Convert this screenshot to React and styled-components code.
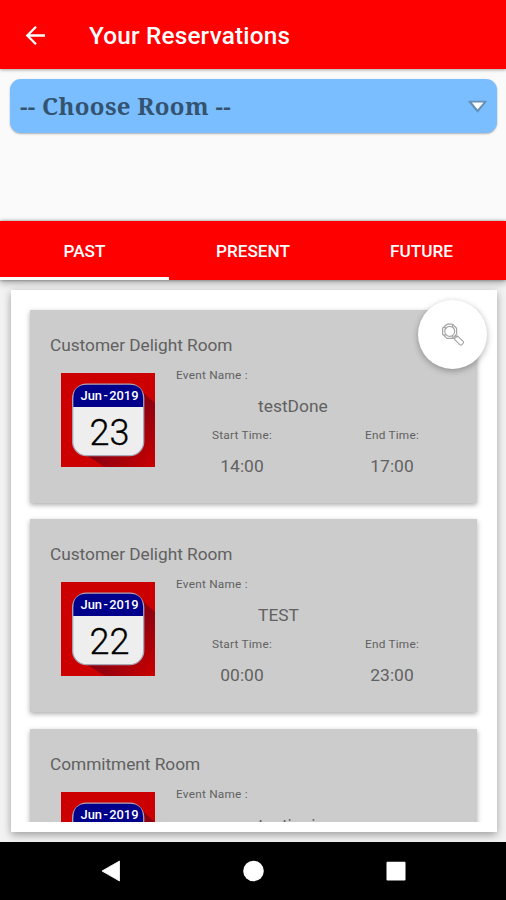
import React from "react";
import styled, { createGlobalStyle } from "styled-components";

const GlobalStyle = createGlobalStyle`
  * { box-sizing: border-box; }
  body { margin: 0; background: #fafafa; font-family: Roboto, sans-serif; }
`;

const Screen = styled.div`
  width: 506px;
  height: 900px;
  display: flex;
  flex-direction: column;
  background: #fafafa;
  overflow: hidden;
`;

const AppBar = styled.header`
  height: 69px;
  flex: none;
  display: flex;
  align-items: center;
  padding: 2px 0 0 25px;
  background: #fe0000;
  box-shadow: 0 1px 3px rgba(0, 0, 0, 0.35);
  svg { display: block; }
`;

const Title = styled.h1`
  margin: 0 0 0 43px;
  font-size: 24.3px;
  font-weight: 500;
  line-height: 30px;
  letter-spacing: 0.2px;
  color: #fff;
  white-space: nowrap;
`;

const Filter = styled.section`
  height: 152px;
  flex: none;
  padding: 10px 9px 0 10px;
`;

const RoomSelect = styled.div`
  height: 54px;
  display: flex;
  align-items: center;
  justify-content: space-between;
  padding: 0 10px;
  border-radius: 11px;
  background: #7abeff;
  box-shadow: 0 1px 2px rgba(0, 0, 0, 0.3);
  color: #34536f;
  font: bold 24px/30px "Noto Serif", "DejaVu Serif Condensed", "DejaVu Serif", serif;
  letter-spacing: 0.32px;
  white-space: nowrap;
`;

const Tabs = styled.nav`
  height: 59px;
  flex: none;
  display: grid;
  grid-template-columns: 169px 168px 169px;
  background: #fe0000;
  box-shadow: 0 0 3px rgba(0, 0, 0, 0.4), 0 3px 7px rgba(0, 0, 0, 0.3);
  z-index: 1;
`;

const Tab = styled.div`
  display: flex;
  align-items: center;
  justify-content: center;
  padding-top: 4px;
  border-bottom: 3px solid ${(p) => (p.$active ? "#fff" : "transparent")};
  color: #fff;
  font-size: 17.2px;
  font-weight: 500;
`;

const Content = styled.main`
  position: relative;
  height: 562px;
  flex: none;
  padding: 10px 9px 10px 11px;
  background: #f2f2f2;
`;

const Panel = styled.div`
  height: 542px;
  padding: 10px 0;
  background: #fff;
  box-shadow: 0 3px 8px rgba(0, 0, 0, 0.35);
`;

const CardList = styled.div`
  height: 521.5px;
  overflow: hidden;
  display: flex;
  flex-direction: column;
  gap: 16.5px;
  padding: 9.5px 20px 0 19px;
`;

const Card = styled.article`
  height: 193px;
  flex: none;
  padding: 24px 10px 0 20px;
  background: #ccc;
  box-shadow: 0 2px 5px rgba(0, 0, 0, 0.33);
  color: #616161;
`;

const RoomName = styled.h2`
  margin: 0;
  font-size: 17.3px;
  font-weight: 400;
  line-height: 22px;
  letter-spacing: -0.03px;
  white-space: nowrap;
`;

const CardBody = styled.div`
  display: grid;
  grid-template-columns: 94px 300px;
  column-gap: 12px;
  padding: 9px 0 0 11px;
`;

const DateTile = styled.div`
  margin-top: 8px;
  width: 94px;
  height: 94px;
  display: grid;
  background: #c00;
  > * { grid-area: 1 / 1; }
`;

const DateText = styled.div`
  display: flex;
  flex-direction: column;
  align-items: center;
  padding: 13px 0 0 3px;
  white-space: nowrap;
`;

const Month = styled.span`
  color: #fff;
  font-size: 12.9px;
  font-weight: 500;
  line-height: 20px;
  word-spacing: -1.8px;
`;

const Day = styled.span`
  margin-top: 5px;
  color: #000;
  font-size: 36px;
  font-weight: 300;
  line-height: 44px;
  -webkit-text-stroke: 0.3px #000;
`;

const Details = styled.div`
  display: flex;
  flex-direction: column;
`;

const Label = styled.div`
  height: 20px;
  padding-left: ${(p) => p.$indent || 0}px;
  font-size: 11.8px;
  line-height: 20px;
  letter-spacing: 0.24px;
  white-space: nowrap;
`;

const Value = styled.div`
  height: 24px;
  padding-left: ${(p) => p.$indent || 0}px;
  font-size: 17.4px;
  line-height: 24px;
  white-space: nowrap;
`;

const EventName = styled(Value)`
  margin-top: 9px;
`;

const Times = styled.div`
  display: grid;
  grid-template-columns: 1fr 1fr;
  row-gap: 9px;
  margin-top: 7px;
  text-align: center;
`;

const SearchButton = styled.button`
  position: absolute;
  top: 19.5px;
  right: 19px;
  width: 69px;
  height: 69px;
  padding: 2px 0 0;
  border: 0;
  border-radius: 50%;
  background: #fff;
  box-shadow: 0 2px 6px rgba(0, 0, 0, 0.3);
  display: flex;
  align-items: center;
  justify-content: center;
`;

const SystemNav = styled.footer`
  height: 58px;
  flex: none;
  display: flex;
  align-items: center;
  justify-content: center;
  background: #000;
  z-index: 1;
`;

const BackArrow = () => (
  <svg width="21" height="21" viewBox="0 0 21 21" fill="none" stroke="#fff" strokeWidth="2.3">
    <path d="M20 10.5H2M11 1.8l-8.7 8.7 8.7 8.7" />
  </svg>
);

const DropArrow = () => (
  <svg width="19" height="13" viewBox="0 0 19 13">
    <path d="M1 1.5h17L9.6 11.7z" fill="#5f87ad" stroke="#6593bc" strokeWidth="1.4" strokeLinejoin="round" />
    <path d="M3.8 2.4h11.8L9.6 9.6z" fill="#fff" />
  </svg>
);

const SearchIcon = () => (
  <svg width="24" height="24" viewBox="0 0 24 24" fill="none" stroke="#a6a6a6" strokeWidth="1.2" strokeLinejoin="round">
    <path d="M6 1.2h5.4l4.2 4v6l-4.2 4.2H6l-4.4-4.2v-6z" />
    <circle cx="8.7" cy="8.3" r="5" />
    <path d="M3 4.2l2.5 1.3M11.8 2l-.6 2.2M3 12.4l2.3-1M11.5 14.6l-.5-2M14.3 12.4l2 2.1M12.2 14.6l1.8 2M16.4 12.9l6 5.7q.7.9-.9 2.5t-2.5.8l-5.5-5.6q-.2-2.1 2.9-3.4z" />
  </svg>
);

const CalendarArt = ({ id }) => (
  <svg width="94" height="94" viewBox="0 0 94 94">
    <defs>
      <linearGradient id={id} x1="0" y1="0" x2="1" y2="1">
        <stop offset="0.45" stopColor="#820014" />
        <stop offset="0.98" stopColor="#c80000" />
      </linearGradient>
    </defs>
    <path d="M79 17l15 13v64H44L22 80z" fill={`url(#${id})`} />
    <rect x="11.7" y="11.2" width="71" height="71.5" rx="14" fill="#eee" stroke="#aaa6b8" strokeWidth="1.3" />
    <path d="M12.3 34V25.5q0-13.7 13.7-13.7h42.4q13.7 0 13.7 13.7v8.5z" fill="#00008b" />
  </svg>
);

const Reservation = ({ id, room, month, day, event, start, end }) => (
  <Card>
    <RoomName>{room}</RoomName>
    <CardBody>
      <DateTile>
        <CalendarArt id={id} />
        <DateText>
          <Month>{month}</Month>
          {day && <Day>{day}</Day>}
        </DateText>
      </DateTile>
      <Details>
        <Label $indent={9}>Event Name :</Label>
        <EventName $indent={91}>{event}</EventName>
        {start && (
          <Times>
            <Label>Start Time:</Label>
            <Label>End Time:</Label>
            <Value>{start}</Value>
            <Value>{end}</Value>
          </Times>
        )}
      </Details>
    </CardBody>
  </Card>
);

const reservations = [
  { id: "r1", room: "Customer Delight Room", month: "Jun - 2019", day: "23", event: "testDone", start: "14:00", end: "17:00" },
  { id: "r2", room: "Customer Delight Room", month: "Jun - 2019", day: "22", event: "TEST", start: "00:00", end: "23:00" },
  { id: "r3", room: "Commitment Room", month: "Jun - 2019", event: "testingin" },
];

export default function App() {
  return (
    <>
      <GlobalStyle />
      <Screen>
        <AppBar>
          <BackArrow />
          <Title>Your Reservations</Title>
        </AppBar>
        <Filter>
          <RoomSelect>
            <span>-- Choose Room --</span>
            <DropArrow />
          </RoomSelect>
        </Filter>
        <Tabs>
          <Tab $active>PAST</Tab>
          <Tab>PRESENT</Tab>
          <Tab>FUTURE</Tab>
        </Tabs>
        <Content>
          <Panel>
            <CardList>
              {reservations.map((r) => (
                <Reservation key={r.id} {...r} />
              ))}
            </CardList>
          </Panel>
          <SearchButton aria-label="Search">
            <SearchIcon />
          </SearchButton>
        </Content>
        <SystemNav>
          <svg width="306" height="22" viewBox="0 0 306 22" fill="#fff">
            <path d="M2 11L19.5 1v20z" strokeLinejoin="round" stroke="#fff" strokeWidth=".8" />
            <circle cx="153.5" cy="11" r="10.3" />
            <rect x="286.5" y="1.8" width="19" height="18.8" rx="1" />
          </svg>
        </SystemNav>
      </Screen>
    </>
  );
}
